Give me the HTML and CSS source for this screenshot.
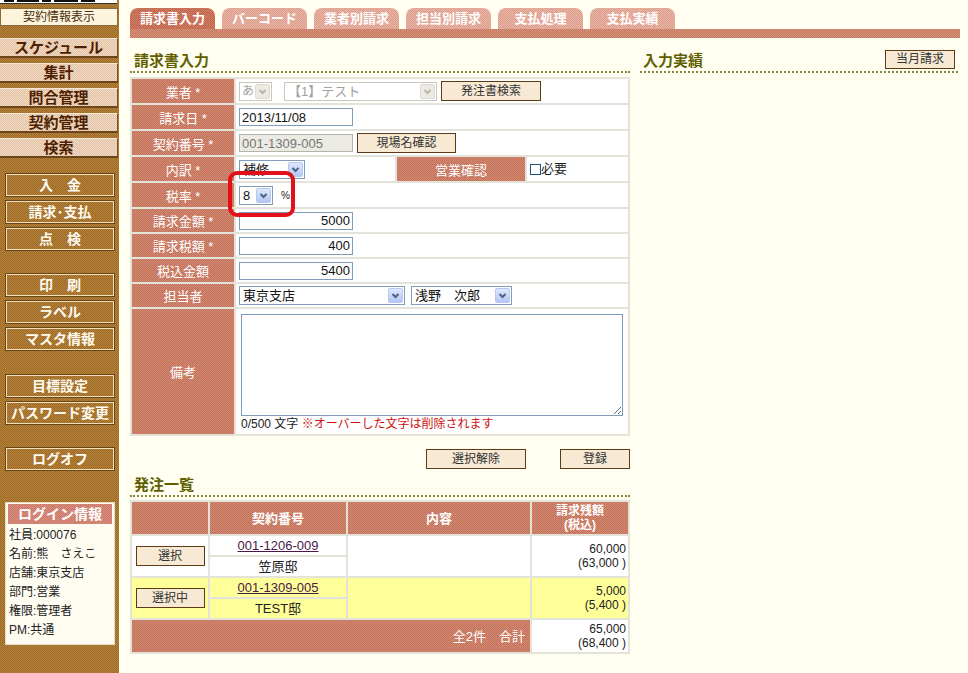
FILE: index.html
```html
<!DOCTYPE html>
<html lang="ja">
<head>
<meta charset="utf-8">
<title>請求書入力</title>
<link rel="stylesheet" href="styles.css">
</head>
<body>
<div class="page">
  <aside class="side">
    <div class="side-top"><i class="ink i1"></i><i class="ink i2"></i><i class="ink i3"></i><i class="ink i4"></i><i class="ink i5"></i></div>
    <div class="info-btn">契約情報表示</div>
    <nav class="menu-main">
      <div class="mbtn">スケジュール</div>
      <div class="mbtn">集計</div>
      <div class="mbtn">問合管理</div>
      <div class="mbtn">契約管理</div>
      <div class="mbtn">検索</div>
    </nav>
    <nav class="menu-sub g1">
      <div class="sbtn">入　金</div>
      <div class="sbtn">請求･支払</div>
      <div class="sbtn">点　検</div>
    </nav>
    <nav class="menu-sub g2">
      <div class="sbtn">印　刷</div>
      <div class="sbtn">ラベル</div>
      <div class="sbtn">マスタ情報</div>
    </nav>
    <nav class="menu-sub g3">
      <div class="sbtn">目標設定</div>
      <div class="sbtn">パスワード変更</div>
    </nav>
    <nav class="menu-sub g4">
      <div class="sbtn">ログオフ</div>
    </nav>
    <div class="login">
      <div class="login-head">ログイン情報</div>
      <ul>
        <li>社員:000076</li>
        <li>名前:熊　さえこ</li>
        <li>店舗:東京支店</li>
        <li>部門:営業</li>
        <li>権限:管理者</li>
        <li>PM:共通</li>
      </ul>
    </div>
  </aside>

  <main class="main">
    <div class="tabs">
      <div class="tab on">請求書入力</div>
      <div class="tab">バーコード</div>
      <div class="tab">業者別請求</div>
      <div class="tab">担当別請求</div>
      <div class="tab">支払処理</div>
      <div class="tab">支払実績</div>
    </div>
    <div class="band"></div>

    <div class="cols">
      <section class="left">
        <h2 class="heading">請求書入力</h2>
        <table class="form">
          <colgroup><col class="c1"><col class="c2"><col class="c3"><col class="c4"></colgroup>
          <tr class="r24">
            <th>業者 *</th>
            <td colspan="3">
              <span class="sel dis w-a"><span class="sel-val">あ</span><span class="sel-btn"><svg viewBox="0 0 13 13"><path d="M3.5 5l3 3 3-3"/></svg></span></span><span class="sel dis w-test"><span class="sel-val">【1】テスト</span><span class="sel-btn"><svg viewBox="0 0 13 13"><path d="M3.5 5l3 3 3-3"/></svg></span></span><button class="btn b-order">発注書検索</button>
            </td>
          </tr>
          <tr class="r24">
            <th>請求日 *</th>
            <td colspan="3"><input class="inp" type="text" value="2013/11/08"></td>
          </tr>
          <tr class="r24">
            <th>契約番号 *</th>
            <td colspan="3"><input class="inp ro" type="text" value="001-1309-005" disabled><button class="btn b-site">現場名確認</button></td>
          </tr>
          <tr class="r24">
            <th>内訳 *</th>
            <td><span class="sel w-kind"><span class="sel-val">補修</span><span class="sel-btn"><svg viewBox="0 0 13 13"><path d="M3.5 5l3 3 3-3"/></svg></span></span></td>
            <th>営業確認</th>
            <td><span class="chk"></span><span class="chk-lbl">必要</span></td>
          </tr>
          <tr class="r24">
            <th>税率 *</th>
            <td colspan="3" class="rate-cell"><span class="sel w-rate"><span class="sel-val">8</span><span class="sel-btn"><svg viewBox="0 0 13 13"><path d="M3.5 5l3 3 3-3"/></svg></span></span><span class="pct">%</span><span class="mark"></span></td>
          </tr>
          <tr class="r23">
            <th>請求金額 *</th>
            <td colspan="3"><input class="inp num" type="text" value="5000"></td>
          </tr>
          <tr class="r23">
            <th>請求税額 *</th>
            <td colspan="3"><input class="inp num" type="text" value="400"></td>
          </tr>
          <tr class="r23">
            <th>税込金額</th>
            <td colspan="3"><input class="inp num" type="text" value="5400"></td>
          </tr>
          <tr class="r23">
            <th>担当者</th>
            <td colspan="3"><span class="sel w-shop"><span class="sel-val">東京支店</span><span class="sel-btn"><svg viewBox="0 0 13 13"><path d="M3.5 5l3 3 3-3"/></svg></span></span><span class="sel w-staff"><span class="sel-val">浅野　次郎</span><span class="sel-btn"><svg viewBox="0 0 13 13"><path d="M3.5 5l3 3 3-3"/></svg></span></span></td>
          </tr>
          <tr class="r-note">
            <th>備考</th>
            <td colspan="3" class="note-cell">
              <textarea class="note"></textarea>
              <div class="note-count">0/500 文字 <span class="warn">※オーバーした文字は削除されます</span></div>
            </td>
          </tr>
        </table>

        <div class="actions">
          <button class="btn b-clear">選択解除</button>
          <button class="btn b-save">登録</button>
        </div>

        <h2 class="heading h-list">発注一覧</h2>
        <table class="list">
          <colgroup><col class="l1"><col class="l2"><col class="l3"><col class="l4"></colgroup>
          <tr class="head">
            <th></th>
            <th>契約番号</th>
            <th>内容</th>
            <th class="two">請求残額<br>(税込)</th>
          </tr>
          <tr>
            <td rowspan="2"><button class="btn b-pick">選択</button></td>
            <td><a class="lnk">001-1206-009</a></td>
            <td rowspan="2"></td>
            <td rowspan="2" class="amt">60,000<br>(63,000 )</td>
          </tr>
          <tr>
            <td>笠原邸</td>
          </tr>
          <tr class="picked">
            <td rowspan="2"><button class="btn b-pick">選択中</button></td>
            <td><a class="lnk">001-1309-005</a></td>
            <td rowspan="2"></td>
            <td rowspan="2" class="amt">5,000<br>(5,400 )</td>
          </tr>
          <tr class="picked">
            <td>TEST邸</td>
          </tr>
          <tr class="foot">
            <th colspan="3">全2件　合計</th>
            <td class="amt">65,000<br>(68,400 )</td>
          </tr>
        </table>
      </section>

      <section class="right">
        <h2 class="heading h-right"><span>入力実績</span><button class="btn b-month">当月請求</button></h2>
      </section>
    </div>
  </main>
</div>
</body>
</html>
```

FILE: styles.css
```css
* { box-sizing: border-box; }

html, body {
  margin: 0;
  padding: 0;
}

body {
  background: #fffef0;
  font-family: "Liberation Sans", "Noto Sans CJK JP", sans-serif;
  font-size: 12px;
  color: #222;
}

.page {
  display: flex;
  width: 968px;
  height: 673px;
  overflow: hidden;
}

/* ---------- sidebar ---------- */
.side {
  width: 119px;
  flex: none;
  display: flex;
  flex-direction: column;
  background: repeating-conic-gradient(#b4823b 0 25%, #9d6b25 0 50%) 0 0 / 2px 2px;
}

.side-top {
  height: 4px;
  width: 117px;
  background: #fff;
  border-bottom: 1px solid #333;
  display: flex;
  align-items: flex-start;
  gap: 3px;
  padding-left: 4px;
}

.ink {
  display: block;
  height: 2px;
  background: #111;
}

.i1 { width: 10px; }
.i2 { width: 22px; }
.i3 { width: 9px; }
.i4 { width: 24px; }
.i5 { width: 14px; }

.info-btn {
  margin-top: 4px;
  width: 118px;
  height: 18px;
  background: #fdf4de;
  border: 1px solid #8b6a3a;
  text-align: center;
  font-size: 12px;
  line-height: 16px;
  color: #4a3010;
}

.menu-main {
  margin-top: 12px;
  display: flex;
  flex-direction: column;
  gap: 5px;
}

.mbtn {
  width: 118px;
  height: 20px;
  background: repeating-conic-gradient(#f1d9c2 0 25%, #e2c3a7 0 50%) 0 0 / 2px 2px;
  border-top: 1px solid #f6e7d6;
  border-bottom: 2px solid #6c451a;
  border-right: 1px solid #7a5226;
  text-align: center;
  font-size: 15px;
  font-weight: bold;
  line-height: 17px;
  color: #4e1f00;
}

.menu-sub {
  display: flex;
  flex-direction: column;
  gap: 5px;
  margin-left: 6px;
}

.g1 { margin-top: 16px; }
.g2 { margin-top: 24px; }
.g3 { margin-top: 25px; }
.g4 { margin-top: 24px; }

.sbtn {
  width: 108px;
  height: 22px;
  border: 1px solid #f1dfbc;
  box-shadow: 0 0 0 1px #6a4516;
  text-align: center;
  color: #fffaf0;
  font-weight: bold;
  font-size: 14px;
  line-height: 20px;
  white-space: nowrap;
}

.login {
  margin: 32px 0 0 5px;
  width: 110px;
  height: 143px;
  background: #fffdf2;
  border: 1px solid #e8dcc0;
  padding: 1px 2px;
}

.login-head {
  height: 20px;
  background: repeating-conic-gradient(#db8f80 0 25%, #c97767 0 50%) 0 0 / 2px 2px;
  color: #fff;
  font-weight: bold;
  font-size: 14px;
  line-height: 20px;
  text-align: center;
}

.login ul {
  list-style: none;
  margin: 2px 0 0;
  padding: 0 0 0 1px;
  font-size: 12px;
  line-height: 19px;
  color: #222;
}

/* ---------- main ---------- */
.main {
  flex: 1;
  padding: 8px 0 0 11px;
}

.tabs {
  display: flex;
  gap: 7px;
  height: 21px;
}

.tab {
  width: 85px;
  border-radius: 8px 8px 0 0;
  text-align: center;
  color: #fff;
  font-weight: bold;
  font-size: 13px;
  line-height: 22px;
  background: repeating-conic-gradient(#eab4a4 0 25%, #dc9e8d 0 50%) 0 0 / 2px 2px;
}

.tab.on {
  background: repeating-conic-gradient(#d17d63 0 25%, #bf664c 0 50%) 0 0 / 2px 2px;
}

.band {
  width: 830px;
  height: 9px;
  background: repeating-conic-gradient(#d69079 0 25%, #c67b63 0 50%) 0 0 / 2px 2px;
}

.cols {
  display: flex;
  gap: 10px;
  margin-top: 12px;
}

.left { width: 500px; }
.right { width: 318px; }

.heading {
  margin: 0;
  height: 23px;
  font-size: 15px;
  font-weight: bold;
  color: #5f5f00;
  line-height: 21px;
  border-bottom: 2px dotted #85853a;
  padding-left: 4px;
}

.h-right {
  display: flex;
  justify-content: space-between;
  align-items: flex-start;
  padding-left: 3px;
}

.h-right span { line-height: 21px; }

/* ---------- form ---------- */
.form,
.list {
  border-collapse: separate;
  border-spacing: 2px;
  background: #e3e3da;
  table-layout: fixed;
  width: 500px;
}

.form { margin-top: 4px; }

.c1 { width: 102px; }
.c2 { width: 159px; }
.c3 { width: 128px; }
.c4 { width: 101px; }

.form th {
  background: repeating-conic-gradient(#d48b73 0 25%, #c2705a 0 50%) 0 0 / 2px 2px;
  color: #fff;
  font-weight: normal;
  font-size: 13px;
  padding: 0;
  text-align: center;
}

.form td {
  background: #fff;
  padding: 0 0 0 3px;
  vertical-align: middle;
  white-space: nowrap;
}

.r24 { height: 24px; }
.r23 { height: 23px; }
.r-note { height: 125px; }

.inp {
  display: inline-block;
  width: 114px;
  height: 18px;
  margin: 0;
  border: 1px solid #7f9db9;
  background: #fff;
  font: 13px "Liberation Sans", "Noto Sans CJK JP", sans-serif;
  line-height: 16px;
  padding: 0 2px;
  color: #111;
  vertical-align: middle;
}

.inp.ro {
  background: #ebebe4;
  color: #777;
  border-color: #b4b4a8;
}

.inp.num { text-align: right; }

.sel {
  display: inline-flex;
  align-items: center;
  height: 19px;
  border: 1px solid #7f9db9;
  background: #fff;
  vertical-align: middle;
}

.sel-val {
  flex: 1;
  padding-left: 3px;
  font-size: 13px;
  line-height: 17px;
  overflow: hidden;
  white-space: nowrap;
  color: #111;
}

.sel-btn {
  flex: none;
  width: 15px;
  height: 15px;
  margin: 0 1px;
  border: 1px solid #b6c8f0;
  border-radius: 2px;
  background: linear-gradient(#dde7fd, #b4c8f5);
  display: flex;
  align-items: center;
  justify-content: center;
}

.sel-btn svg {
  width: 13px;
  height: 13px;
  fill: none;
  stroke: #4d6185;
  stroke-width: 2;
}

.sel.dis { border-color: #c9c7ba; }
.sel.dis .sel-val { color: #a0a0a0; }
.sel.dis .sel-btn { background: #eceae3; border-color: #dcdad2; }
.sel.dis .sel-btn svg { stroke: #b8b6ae; }

.w-a { width: 33px; }
.w-a .sel-val { padding-left: 2px; font-size: 12px; overflow: visible; }
.w-test { width: 153px; margin-left: 12px; }
.w-kind { width: 66px; }
.w-rate { width: 34px; }
.w-shop { width: 166px; }
.w-staff { width: 101px; margin-left: 6px; }

.btn {
  height: 20px;
  margin: 0;
  padding: 0;
  border: 1px solid #5c3b17;
  background: #f7e9d3;
  color: #333;
  font: 12px "Liberation Sans", "Noto Sans CJK JP", sans-serif;
  line-height: 18px;
  vertical-align: middle;
}

.b-order { width: 100px; margin-left: 4px; }
.b-site { width: 99px; margin-left: 4px; }

.chk {
  display: inline-block;
  width: 11px;
  height: 11px;
  border: 1px solid #1c5180;
  background: #fff;
  vertical-align: middle;
  margin-left: 0;
}

.chk-lbl {
  font-size: 13px;
  line-height: 16px;
  vertical-align: middle;
}

.rate-cell { position: relative; }

.pct {
  display: inline-block;
  margin-left: 8px;
  font-size: 10px;
  vertical-align: middle;
}

.mark {
  position: absolute;
  left: -8px;
  top: -12px;
  width: 67px;
  height: 46px;
  border: 4px solid #e3101a;
  border-radius: 9px;
}

.note-cell {
  vertical-align: top !important;
  padding-top: 5px !important;
}

.note {
  display: block;
  width: 382px;
  height: 102px;
  margin: 0 0 0 2px;
  border: 1px solid #7f9db9;
  background: #fff;
  resize: both;
}

.note-count {
  margin: 1px 0 0 2px;
  font-size: 12px;
  line-height: 14px;
  color: #222;
}

.warn { color: #cc1010; }

.actions {
  display: flex;
  justify-content: flex-end;
  gap: 34px;
  margin-top: 13px;
}

.b-clear { width: 100px; }
.b-save { width: 70px; }

.h-list { margin-top: 5px; }

/* ---------- list ---------- */
.list { margin-top: 3px; }

.l1 { width: 76px; }
.l2 { width: 136px; }
.l3 { width: 182px; }
.l4 { width: 96px; }

.list th {
  height: 32px;
  padding: 0;
  background: repeating-conic-gradient(#d48b73 0 25%, #c2705a 0 50%) 0 0 / 2px 2px;
  color: #fff;
  font-weight: bold;
  font-size: 13px;
  line-height: 15px;
  text-align: center;
}

.list th.two {
  line-height: 14px;
  font-size: 12px;
}

.list td {
  height: 19px;
  padding: 0;
  background: #fff;
  text-align: center;
  font-size: 13px;
  line-height: 17px;
  color: #222;
}

.list tr.picked td { background: #ffff99; }

.list td.amt {
  text-align: right;
  padding-right: 2px;
  font-size: 12px;
  line-height: 14px;
}

.list .foot th {
  text-align: right;
  padding-right: 5px;
  font-weight: normal;
}

.lnk {
  color: #4b1848;
  text-decoration: underline;
}

.b-pick { width: 69px; }

.b-month { width: 70px; height: 19px; margin-right: 3px; font-size: 12px; line-height: 17px; }
```
